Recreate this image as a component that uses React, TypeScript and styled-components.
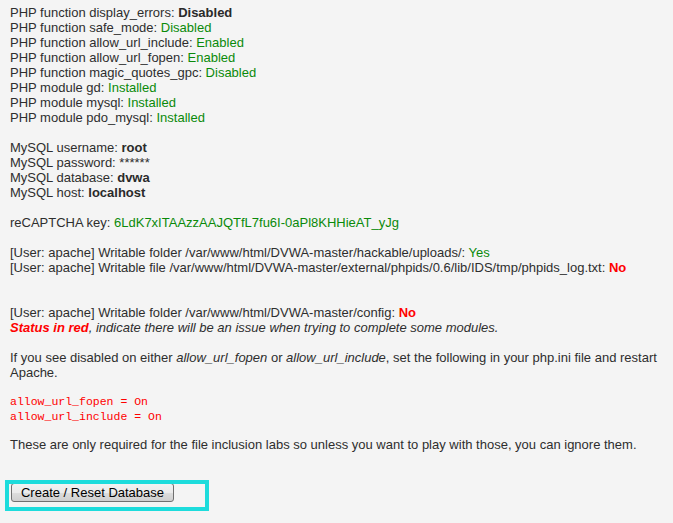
import React from "react";
import styled, { createGlobalStyle } from "styled-components";

const Global = createGlobalStyle`
  html, body { margin: 0; padding: 0; background: #f4f4f4; }
  body { font-family: "Liberation Sans", Arial, sans-serif; font-size: 13px; color: #2e2e2e; }
`;

const Page = styled.div`
  position: relative;
  padding: 5px 10px 0 10px;
  min-height: 523px;
  box-sizing: border-box;
`;

const Block = styled.div<{ $mt?: number }>`
  margin-top: ${(p) => p.$mt ?? 0}px;
  line-height: 15px;
`;

const Line = styled.div`
  white-space: nowrap;
`;

const Para = styled.p<{ $mt?: number }>`
  margin: ${(p) => p.$mt ?? 0}px 0 0 0;
  line-height: 15px;
`;

const Strong = styled.b`
  color: #2a2a2a;
`;

const Good = styled.span`
  color: #0a8a0a;
`;

const Bad = styled.b`
  color: #ff0000;
`;

const StatusNote = styled.em`
  color: #2e2e2e;
`;

const BadStrong = styled.b`
  color: #ff0000;
  font-style: italic;
`;

const Code = styled.pre`
  margin: 14px 0 0 0;
  font-family: "Liberation Mono", "Courier New", monospace;
  font-size: 11.5px;
  line-height: 15px;
  color: #ff0000;
`;

const ButtonRow = styled.div`
  margin-top: 31px;
  padding-left: 1px;
`;

const Button = styled.button`
  height: 19px;
  width: 163px;
  padding: 0 8px;
  font-family: "Liberation Sans", Arial, sans-serif;
  font-size: 13px;
  color: #000;
  border: 1px solid #707070;
  border-radius: 3px;
  background: linear-gradient(#f2f2f2 0%, #ebebeb 50%, #dddddd 51%, #cfcfcf 100%);
  line-height: 15px;
  cursor: pointer;
  box-sizing: border-box;
`;

const Highlight = styled.div`
  position: absolute;
  left: 5px;
  top: 480px;
  width: 204px;
  height: 31px;
  border: 4px solid #1ddcdc;
  box-sizing: border-box;
  pointer-events: none;
`;

export default function App() {
  return (
    <>
      <Global />
      <Page>
        <Block>
          <Line>PHP function display_errors: <Strong>Disabled</Strong></Line>
          <Line>PHP function safe_mode: <Good>Disabled</Good></Line>
          <Line>PHP function allow_url_include: <Good>Enabled</Good></Line>
          <Line>PHP function allow_url_fopen: <Good>Enabled</Good></Line>
          <Line>PHP function magic_quotes_gpc: <Good>Disabled</Good></Line>
          <Line>PHP module gd: <Good>Installed</Good></Line>
          <Line>PHP module mysql: <Good>Installed</Good></Line>
          <Line>PHP module pdo_mysql: <Good>Installed</Good></Line>
        </Block>
        <Block $mt={15}>
          <Line>MySQL username: <Strong>root</Strong></Line>
          <Line>MySQL password: ******</Line>
          <Line>MySQL database: <Strong>dvwa</Strong></Line>
          <Line>MySQL host: <Strong>localhost</Strong></Line>
        </Block>
        <Block $mt={15}>
          <Line>reCAPTCHA key: <Good>6LdK7xITAAzzAAJQTfL7fu6I-0aPl8KHHieAT_yJg</Good></Line>
        </Block>
        <Block $mt={15}>
          <Line>[User: apache] Writable folder /var/www/html/DVWA-master/hackable/uploads/: <Good>Yes</Good></Line>
          <Line>[User: apache] Writable file /var/www/html/DVWA-master/external/phpids/0.6/lib/IDS/tmp/phpids_log.txt: <Bad>No</Bad></Line>
        </Block>
        <Block $mt={30}>
          <Line>[User: apache] Writable folder /var/www/html/DVWA-master/config: <Bad>No</Bad></Line>
          <Line><BadStrong>Status in red</BadStrong><StatusNote>, indicate there will be an issue when trying to complete some modules.</StatusNote></Line>
        </Block>
        <Para $mt={15}>
          If you see disabled on either <em>allow_url_fopen</em> or <em>allow_url_include</em>, set the following in your php.ini file and restart Apache.
        </Para>
        <Code>{"allow_url_fopen = On\nallow_url_include = On"}</Code>
        <Para $mt={13}>
          These are only required for the file inclusion labs so unless you want to play with those, you can ignore them.
        </Para>
        <ButtonRow>
          <Button type="button">Create / Reset Database</Button>
        </ButtonRow>
        <Highlight />
      </Page>
    </>
  );
}
